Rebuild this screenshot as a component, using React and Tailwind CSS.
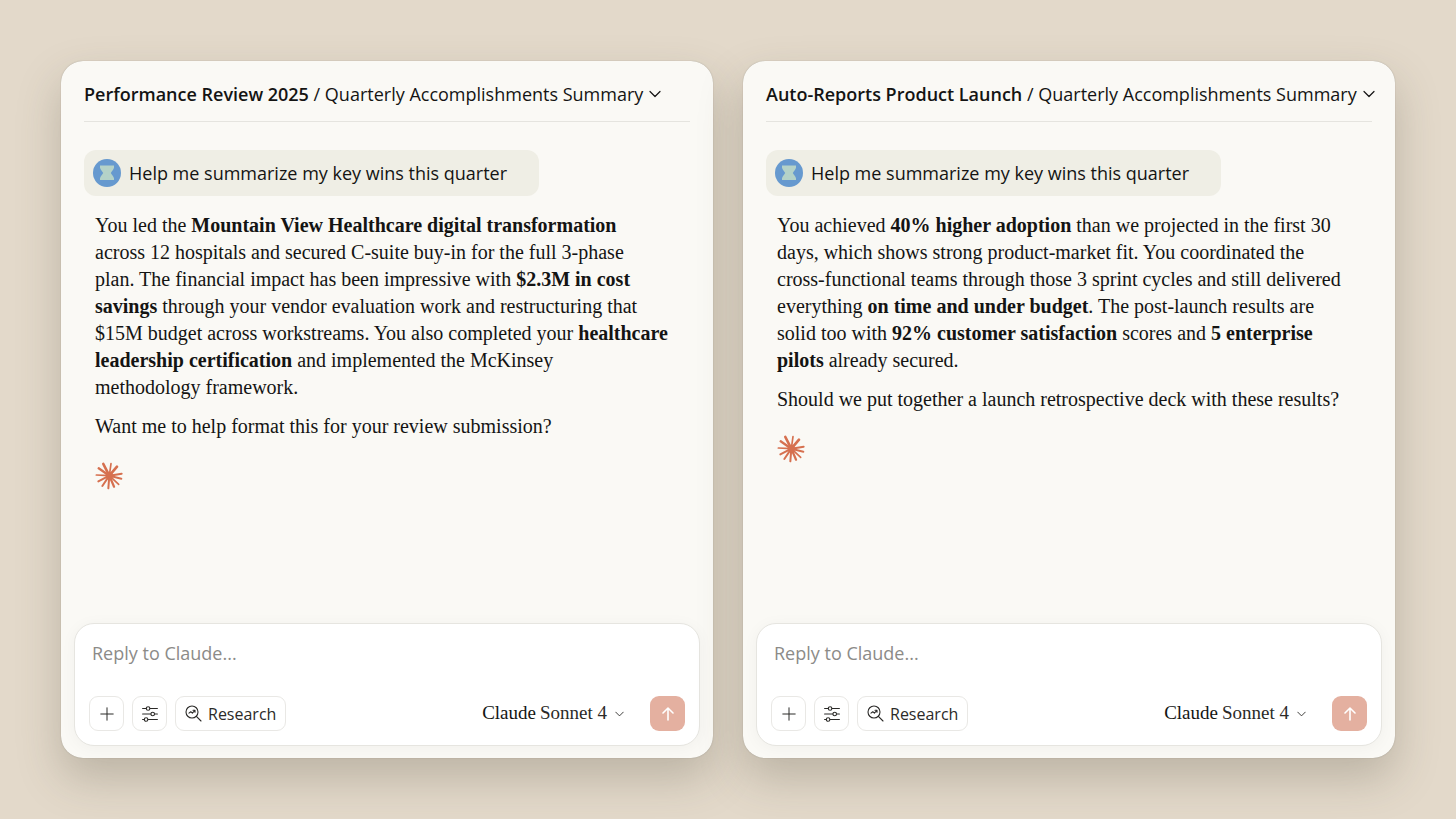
import { useId, useState } from "react";
import { clsx } from "clsx";

const chats = [
  {
    id: "review",
    project: "Performance Review 2025",
    title: "Quarterly Accomplishments Summary",
    prompt: "Help me summarize my key wins this quarter",
    answer: (
      <>
        You led the <strong>Mountain View Healthcare digital transformation</strong>
        <br />
        across 12 hospitals and secured C-suite buy-in for the full 3-phase
        <br />
        plan. The financial impact has been impressive with <strong>$2.3M in cost</strong>
        <br />
        <strong>savings</strong> through your vendor evaluation work and restructuring that
        <br />
        $15M budget across workstreams. You also completed your <strong>healthcare</strong>
        <br />
        <strong>leadership certification</strong> and implemented the McKinsey
        <br />
        methodology framework.
      </>
    ),
    followUp: "Want me to help format this for your review submission?",
  },
  {
    id: "launch",
    project: "Auto-Reports Product Launch",
    title: "Quarterly Accomplishments Summary",
    prompt: "Help me summarize my key wins this quarter",
    answer: (
      <>
        You achieved <strong>40% higher adoption</strong> than we projected in the first 30
        <br />
        days, which shows strong product-market fit. You coordinated the
        <br />
        cross-functional teams through those 3 sprint cycles and still delivered
        <br />
        everything <strong>on time and under budget</strong>. The post-launch results are
        <br />
        solid too with <strong>92% customer satisfaction</strong> scores and <strong>5 enterprise</strong>
        <br />
        <strong>pilots</strong> already secured.
      </>
    ),
    followUp: "Should we put together a launch retrospective deck with these results?",
  },
];

// end point and thickness of each ray
const rays = [
  [25, 6, 8],
  [11, 19, 7],
  [48, 5, 5],
  [66, 14, 8],
  [80, 35, 6],
  [79, 50, 6],
  [71, 67, 5],
  [57, 74, 7],
  [40, 79, 6],
  [22, 72, 6],
  [10, 58, 6],
  [4, 39, 5],
];

function Starburst() {
  return (
    <svg viewBox="0 0 84 84" className="size-7" stroke="#d6704f" strokeLinecap="round" aria-hidden="true">
      {rays.map(([x, y, width]) => (
        <line key={`${x}-${y}`} x1="43" y1="41" x2={x} y2={y} strokeWidth={width} />
      ))}
      <circle cx="43" cy="41" r="11" fill="#d6704f" stroke="none" />
    </svg>
  );
}

function Avatar() {
  return (
    <svg viewBox="0 0 28 28" className="size-7 shrink-0" aria-hidden="true">
      <circle cx="14" cy="14" r="14" fill="#6699cf" />
      <path
        d="M7 6.5h14v2.200c-.6 2-2.200 3.700-3.200 5.300 1 1.600 2.600 3.300 3.200 5.300v1.700H7v-1.700c.6-2 2.200-3.700 3.200-5.300-1-1.600-2.600-3.300-3.200-5.300z"
        fill="#b4d2c8"
      />
    </svg>
  );
}

function Chevron({ className }) {
  return (
    <svg viewBox="0 0 12 8" className={className} fill="none" stroke="currentColor" strokeWidth="1.2" strokeLinecap="round" strokeLinejoin="round" aria-hidden="true">
      <path d="M1 1.500 6 6.500l5-5" />
    </svg>
  );
}

function PlusIcon() {
  return (
    <svg viewBox="0 0 14 14" className="size-3.5" fill="none" stroke="currentColor" strokeLinecap="round" aria-hidden="true">
      <path d="M7 .8v12.400M.8 7h12.400" />
    </svg>
  );
}

function SlidersIcon() {
  return (
    <svg viewBox="0 0 16 16" className="size-4" fill="none" stroke="currentColor" strokeWidth="1.1" strokeLinecap="round" aria-hidden="true">
      <path d="M.6 2.500h3.600M8 2.500h7.400M.6 8h8.200M12.600 8h2.800M6 13.500h9.400M.6 13.500h1.600" />
      <circle cx="6.1" cy="2.5" r="1.8" />
      <circle cx="10.7" cy="8" r="1.8" />
      <circle cx="4.1" cy="13.5" r="1.8" />
    </svg>
  );
}

function ResearchIcon() {
  return (
    <svg viewBox="0 0 17 17" className="size-[17px]" fill="none" stroke="currentColor" strokeWidth="1.1" strokeLinecap="round" strokeLinejoin="round" aria-hidden="true">
      <circle cx="7" cy="7" r="6" />
      <path d="m11.400 11.400 4.600 4.600M4 8.200l1.800-1.500 1.600 1.500 2.400-2.700M8 5.300h2v2" />
    </svg>
  );
}

function ArrowUpIcon() {
  return (
    <svg viewBox="0 0 14 14" className="size-3.5" fill="none" stroke="currentColor" strokeWidth="1.6" strokeLinecap="round" strokeLinejoin="round" aria-hidden="true">
      <path d="M7 13V1M2 6l5-5 5 5" />
    </svg>
  );
}

function ToolButton({ label, className, children }) {
  return (
    <button
      type="button"
      aria-label={label}
      className={clsx(
        "flex h-[35px] items-center justify-center rounded-[9px] border border-[#e9e8e5] text-[#2b2a28]",
        className
      )}
    >
      {children}
    </button>
  );
}

function Composer() {
  const modelId = useId();
  const [message, setMessage] = useState("");

  const handleSubmit = (event) => {
    event.preventDefault();
    setMessage("");
  };

  return (
    <form
      onSubmit={handleSubmit}
      className="mx-[13px] mb-3 rounded-[20px] border border-[#e6e5e0] bg-white px-3.5 pt-4 pb-3.5 shadow-[0_2px_16px_rgba(0,0,0,0.04)]"
    >
      <input
        type="text"
        aria-label="Reply to Claude"
        placeholder="Reply to Claude..."
        value={message}
        onChange={(event) => setMessage(event.target.value)}
        className="block h-[26px] w-full px-[3px] text-[18px] text-[#141413] outline-none placeholder:text-[#8c8b88]"
      />
      <div className="mt-[30px] flex items-center gap-2">
        <ToolButton label="Add" className="w-[35px]">
          <PlusIcon />
        </ToolButton>
        <ToolButton label="Tools" className="w-[35px]">
          <SlidersIcon />
        </ToolButton>
        <ToolButton className="gap-1.5 px-[9px] text-[16px]">
          <ResearchIcon />
          Research
        </ToolButton>
        <div className="relative ml-auto flex items-center gap-1 font-['Liberation_Serif',serif] text-[19px] text-[#2b2a28]">
          <label htmlFor={modelId} className="text-[#141413]">
            Claude
          </label>
          <select id={modelId} className="appearance-none bg-transparent pr-4 outline-none">
            <option>Sonnet 4</option>
          </select>
          <Chevron className="pointer-events-none absolute right-0 h-1.5 w-[9px]" />
        </div>
        <button
          type="submit"
          aria-label="Send"
          className="ml-[18px] flex size-[35px] items-center justify-center rounded-[9px] bg-[#e4b0a0] text-white"
        >
          <ArrowUpIcon />
        </button>
      </div>
    </form>
  );
}

function ChatCard({ chat }) {
  return (
    <section className="flex min-w-0 flex-col rounded-[22px] bg-[#faf9f5] shadow-[0_0_1px_rgba(80,76,62,0.5),0_20px_44px_rgba(80,76,62,0.27)]">
      <header className="mx-[23px] border-b border-[#e5e4df] pt-[19px] pb-[13px]">
        <button type="button" aria-haspopup="menu" className="flex items-center gap-1.5 text-[18px] leading-7 whitespace-nowrap">
          <h2>
            <strong className="font-semibold">{chat.project}</strong> / {chat.title}
          </h2>
          <Chevron className="h-2 w-3" />
        </button>
      </header>

      <div className="flex-1 px-[23px] pt-7 pb-6">
        <div className="flex h-[46px] w-fit items-center gap-2 rounded-xl bg-[#efeee5] pr-8 pl-[9px] text-[18px] whitespace-nowrap">
          <Avatar />
          <p>{chat.prompt}</p>
        </div>
        <div className="mt-4 px-[11px] font-['Liberation_Serif',serif] text-[20px] leading-[27px] whitespace-nowrap">
          <p>{chat.answer}</p>
          <p className="mt-3">{chat.followUp}</p>
        </div>
        <div className="mt-[22px] px-[11px]">
          <Starburst />
        </div>
      </div>

      <Composer />
    </section>
  );
}

export default function App() {
  return (
    <main className="grid min-h-screen grid-cols-2 gap-[30px] bg-[#e3d9ca] p-[61px] font-['Open_Sans',sans-serif] text-[#141413]">
      {chats.map((chat) => (
        <ChatCard key={chat.id} chat={chat} />
      ))}
    </main>
  );
}
